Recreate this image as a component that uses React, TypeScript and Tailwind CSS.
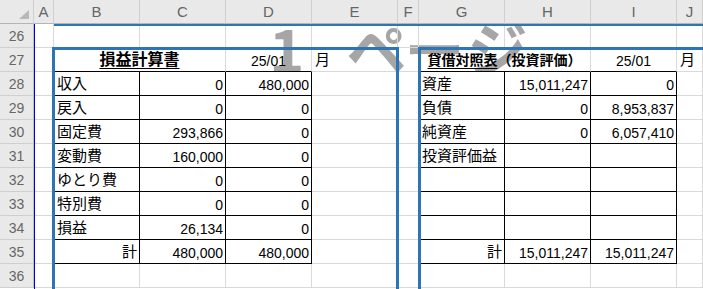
import React from 'react';

type Spec = {
  t?: React.ReactNode;
  a?: 'l' | 'r' | 'c';
  r?: 'k' | 'g';
  b?: 'k' | 'g';
  span?: 2;
  k?: 'jp' | 'num' | 't1' | 't2';
};

const rCls = { k: 'border-r-black', g: 'border-r-[#d9d9d9]' };
const bCls = { k: 'border-b-black', g: 'border-b-[#d9d9d9]' };
const aCls = { l: 'justify-start pl-[3px]', r: 'justify-end pr-[2px]', c: 'justify-center' };
const kCls = {
  jp: 'text-[15px]',
  num: 'text-[14px] pt-[2px]',
  t1: 'text-[16px] font-bold',
  t2: 'text-[14px] font-bold',
};

function Cell({ s }: { s: Spec }) {
  return (
    <div
      className={`relative z-10 flex h-[24px] items-center whitespace-nowrap border-r border-b leading-none text-black ${
        rCls[s.r ?? 'g']
      } ${bCls[s.b ?? 'g']} ${aCls[s.a ?? 'l']} ${kCls[s.k ?? 'jp']} ${s.span === 2 ? 'col-span-2' : ''}`}
    >
      {s.t}
    </div>
  );
}

function RowHead({ n }: { n: number }) {
  return (
    <div className="relative z-10 flex h-[24px] items-center justify-center border-r border-b border-r-[#bdbdbd] border-b-[#cfcfcf] bg-[#e9e9e9] text-[14px] leading-none text-[#666666]">
      {n}
    </div>
  );
}

const left: [string, string, string][] = [
  ['収入', '0', '480,000'],
  ['戻入', '0', '0'],
  ['固定費', '293,866', '0'],
  ['変動費', '160,000', '0'],
  ['ゆとり費', '0', '0'],
  ['特別費', '0', '0'],
  ['損益', '26,134', '0'],
  ['計', '480,000', '480,000'],
];

const right: [string, string, string][] = [
  ['資産', '15,011,247', '0'],
  ['負債', '0', '8,953,837'],
  ['純資産', '0', '6,057,410'],
  ['投資評価益', '', ''],
  ['', '', ''],
  ['', '', ''],
  ['', '', ''],
  ['計', '15,011,247', '15,011,247'],
];

const letters = ['A', 'B', 'C', 'D', 'E', 'F', 'G', 'H', 'I', 'J'];

export default function App() {
  const rows: Spec[][] = [];
  rows.push(letters.map(() => ({})));
  rows.push([
    {},
    { t: <span className="underline underline-offset-[3px]">損益計算書</span>, a: 'c', span: 2, b: 'k', k: 't1' },
    { t: '25/01', a: 'c', b: 'k', k: 'num' },
    { t: '月' },
    {},
    {
      t: (
        <span>
          <span className="underline underline-offset-[3px]">貸借対照表</span>（投資評価）
        </span>
      ),
      a: 'c',
      span: 2,
      b: 'k',
      k: 't2',
    },
    { t: '25/01', a: 'c', b: 'k', k: 'num' },
    { t: '月' },
  ]);
  for (let i = 0; i < 8; i++) {
    const L = left[i];
    const R = right[i];
    const last = i === 7;
    rows.push([
      { r: 'k' },
      { t: L[0], a: last ? 'r' : 'l', r: 'k', b: 'k' },
      { t: L[1], a: 'r', r: 'k', b: 'k', k: 'num' },
      { t: L[2], a: 'r', r: 'k', b: 'k', k: 'num' },
      {},
      { r: 'k' },
      { t: R[0], a: last ? 'r' : 'l', r: 'k', b: 'k' },
      { t: R[1], a: 'r', r: 'k', b: 'k', k: 'num' },
      { t: R[2], a: 'r', r: 'k', b: 'k', k: 'num' },
      {},
    ]);
  }
  rows.push(letters.map(() => ({})));

  return (
    <div className="relative h-[289px] w-[703px] overflow-hidden bg-white font-['Liberation_Sans','Noto_Sans_CJK_JP',sans-serif]">
      <div className="grid grid-cols-[34px_20px_86px_86px_86px_86px_21px_86px_86px_86px_26px] grid-rows-[repeat(12,24px)]">
        <div className="relative z-10 flex h-[24px] items-end justify-end border-r border-b border-r-[#cfcfcf] border-b-[#b5b5b5] bg-[#e9e9e9] pr-[4px] pb-[4px]">
          <svg width="10" height="9" viewBox="0 0 10 9">
            <polygon points="10,0 10,9 0,9" fill="#b8b8b8" />
          </svg>
        </div>
        {letters.map((l) => (
          <div
            key={l}
            className="relative z-10 flex h-[24px] items-center justify-center border-r border-b border-r-[#cfcfcf] border-b-[#b5b5b5] bg-[#e9e9e9] text-[15px] leading-none text-[#666666]"
          >
            {l}
          </div>
        ))}
        {rows.map((row, ri) => (
          <React.Fragment key={ri}>
            <RowHead n={26 + ri} />
            {row.map((s, ci) => (
              <Cell key={ci} s={s} />
            ))}
          </React.Fragment>
        ))}
      </div>

      {/* page number watermark, behind the cells' text */}
      <div className="pointer-events-none absolute left-[269px] top-[24px] z-0 h-[48px] w-[270px] overflow-hidden">
        <div className="-mt-[7px] flex items-start font-['Noto_Sans_CJK_JP',sans-serif] text-[60px] font-bold leading-none text-[#a6a6a6]">
          <span>1</span>
          <span className="ml-[42px]">ペ</span>
          <span className="-ml-[2px]">ー</span>
          <span className="ml-[3px]">ジ</span>
        </div>
      </div>

      {/* page break markers */}
      <div className="pointer-events-none absolute left-[34px] top-[24px] z-20 h-[265px] w-[1px] bg-[#0000e0]" />
      <div className="pointer-events-none absolute left-[54px] top-[24px] z-20 h-[2px] w-[649px] bg-[#2e75b6]" />
      <div className="pointer-events-none absolute left-[52px] top-[47px] z-20 h-[260px] w-[347px] border-x-[3px] border-t-[3px] border-[#2e75b6]" />
      <div className="pointer-events-none absolute left-[418px] top-[47px] z-20 h-[260px] w-[300px] border-l-[3px] border-t-[3px] border-[#2e75b6]" />
    </div>
  );
}
